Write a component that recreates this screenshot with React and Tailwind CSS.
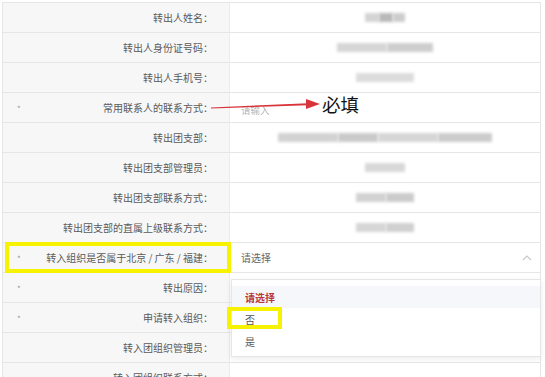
import React from "react";

const rows = [
  { label: "转出人姓名：", blur: [{ w: 14, c: "bg-[#d4d4d4]" }, { w: 14, c: "bg-[#b9b9b9]" }, { w: 12, c: "bg-[#cdcdcd]" }] },
  { label: "转出人身份证号码：", blur: [{ w: 50, c: "bg-[#d6d6d6]" }, { w: 46, c: "bg-[#cecece]" }] },
  { label: "转出人手机号：", blur: [{ w: 58, c: "bg-[#dcdcdc]" }] },
  { label: "常用联系人的联系方式：", star: true, placeholder: "请输入" },
  { label: "转出团支部：", blur: [{ w: 60, c: "bg-[#d2d2d2]" }, { w: 40, c: "bg-[#cacaca]" }, { w: 60, c: "bg-[#d6d6d6]" }, { w: 54, c: "bg-[#cccccc]" }] },
  { label: "转出团支部管理员：", blur: [{ w: 40, c: "bg-[#d8d8d8]" }] },
  { label: "转出团支部联系方式：", blur: [{ w: 30, c: "bg-[#d2d2d2]" }, { w: 28, c: "bg-[#cbcbcb]" }] },
  { label: "转出团支部的直属上级联系方式：", blur: [{ w: 30, c: "bg-[#d6d6d6]" }, { w: 28, c: "bg-[#d0d0d0]" }] },
  { label: "转入组织是否属于北京 / 广东 / 福建：", star: true, select: true },
  { label: "转出原因：", star: true },
  { label: "申请转入组织：", star: true },
  { label: "转入团组织管理员：" },
  { label: "转入团组织联系方式：" },
];

function Row({ r }) {
  return (
    <div className="relative grid grid-cols-[227px_1fr] h-[30px] border-b border-[#e6e6e6]">
      <div className="relative flex items-center justify-end bg-[#f7f7f7] border-r border-[#ececec] pr-[16px] text-[10px] text-[#5a5a5a]">
        {r.star && (
          <span className="absolute left-[14px] top-[12px] text-[8px] text-[#999] leading-none">*</span>
        )}
        <span>{r.label}</span>
        {r.select && (
          <div className="absolute left-[2px] top-[-1px] w-[226px] h-[31px] border-[4px] border-[#f6f200]" />
        )}
      </div>
      <div className="relative flex items-center">
        {r.blur && (
          <div className="flex-1 flex justify-center">
            {r.blur.map((b, i) => (
              <div
                key={i}
                className={`h-[9px] blur-[1.5px] ${b.c}`}
                style={{ width: b.w }}
              />
            ))}
          </div>
        )}
        {r.placeholder && (
          <span className="ml-[11px] mt-[6px] text-[9.5px] text-[#b5b5b5] blur-[0.4px]">{r.placeholder}</span>
        )}
        {r.select && (
          <>
            <span className="ml-[11px] text-[10px] text-[#666]">请选择</span>
            <svg className="absolute right-[8px] top-[12px]" width="10" height="6" viewBox="0 0 10 6">
              <path d="M1 5 L5 1 L9 5" fill="none" stroke="#c8c8c8" strokeWidth="1.2" />
            </svg>
            <div className="absolute left-[1px] top-[36px] w-[310px] h-[78px] z-10 bg-white border border-[#e6e6e6] shadow-[0_2px_6px_rgba(0,0,0,0.08)] pt-[6px] text-[10px]">
              <div className="h-[22px] flex items-center pl-[13px] bg-[#f5f7fa] text-[#b8363c] font-bold">请选择</div>
              <div className="relative h-[22px] flex items-center pl-[13px] text-[#555]">
                否
                <div className="absolute left-[-5px] top-[-1px] w-[55px] h-[22px] border-[4px] border-[#f6f200]" />
              </div>
              <div className="h-[22px] flex items-center pl-[13px] text-[#555]">是</div>
            </div>
          </>
        )}
      </div>
    </div>
  );
}

export default function App() {
  return (
    <div
      className="relative w-[545px] h-[377px] overflow-hidden bg-white"
      style={{ fontFamily: '"Noto Sans CJK SC", "Noto Sans", sans-serif' }}
    >
      <div className="ml-[2px] mt-[2px] w-[539px] border-l border-t border-r border-[#e6e6e6]">
        {rows.map((r, i) => (
          <Row key={i} r={r} />
        ))}
      </div>
      <svg className="absolute left-0 top-0 pointer-events-none" width="545" height="377">
        <path d="M211 107.5 L308 103.2 L308 105.2 L211 108.5 Z" fill="#d8343a" />
        <path d="M306 99 L320 104 L306 109 Z" fill="#d8343a" />
      </svg>
      <span className="absolute left-[322px] top-[92px] text-[18.5px] text-[#111] leading-[24px]">必填</span>
    </div>
  );
}
